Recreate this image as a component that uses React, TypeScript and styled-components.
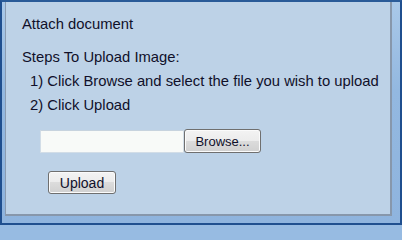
import styled, { createGlobalStyle } from 'styled-components';

const GlobalStyle = createGlobalStyle`
  html, body {
    margin: 0;
    padding: 0;
    background: #97bbe2;
  }
  body {
    font-family: "Liberation Sans", Arial, sans-serif;
  }
`;

const Frame = styled.div`
  box-sizing: border-box;
  width: 402px;
  height: 225px;
  display: flex;
  border: 2px solid #1f4f8f;
  border-top-color: #2a5b98;
  padding: 0 8px 7px 3px;
  background: linear-gradient(180deg, #a9c8e8 0%, #93b8e0 40%, #8fb4de 100%);
`;

const Panel = styled.div`
  flex: 1;
  display: flex;
  flex-direction: column;
  box-sizing: border-box;
  background: #bdd2e7;
  border-left: 1px solid #8a9bb0;
  border-right: 2px solid #8797ab;
  border-bottom: 2px solid #8797ab;
  padding: 13px 0 0 16px;
  color: #10102a;
  font-size: 14.8px;
`;

const Line = styled.div<{ indent?: number; gap?: number }>`
  line-height: 18px;
  height: 18px;
  white-space: nowrap;
  margin-left: ${ (p) => p.indent ?? 0 }px;
  margin-top: ${ (p) => p.gap ?? 0 }px;
`;

const FileRow = styled.div`
  display: flex;
  align-items: flex-end;
  margin: 15px 0 0 18px;
  height: 24px;
`;

const FileInput = styled.div`
  box-sizing: border-box;
  width: 144px;
  height: 23px;
  background: #f8faf8;
  border: 1px solid #d2dde7;
  border-top-color: #c7d3de;
`;

const Button = styled.button<{ w: number; h: number; size: number }>`
  box-sizing: border-box;
  width: ${ (p) => p.w }px;
  height: ${ (p) => p.h }px;
  padding: 0;
  border: 1px solid #6f6f6f;
  border-radius: 3px;
  box-shadow: inset 0 0 0 1px #fbfbfb;
  background: linear-gradient(180deg, #f3f3f3 0%, #ececec 48%, #dcdcdc 50%, #d0d0d0 100%);
  font-family: "Liberation Sans", Arial, sans-serif;
  font-size: ${ (p) => p.size }px;
  color: #10102a;
  line-height: 1;
`;

const UploadWrap = styled.div`
  margin: 18px 0 0 26px;
`;

function App() {
  return (
    <>
      <GlobalStyle />
      <Frame>
        <Panel>
          <Line>Attach document</Line>
          <Line gap={15}>Steps To Upload Image:</Line>
          <Line indent={8} gap={6}>1) Click Browse and select the file you wish to upload</Line>
          <Line indent={8} gap={6}>2) Click Upload</Line>
          <FileRow>
            <FileInput />
            <Button w={77} h={24} size={13}>Browse...</Button>
          </FileRow>
          <UploadWrap>
            <Button w={68} h={23} size={14}>Upload</Button>
          </UploadWrap>
        </Panel>
      </Frame>
    </>
  );
}

export default App;
